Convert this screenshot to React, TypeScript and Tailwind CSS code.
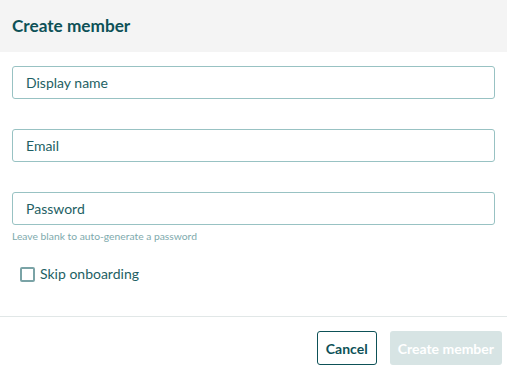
import React from "react";

function Field({ label }: { label: string }) {
  return (
    <div className="h-[33px] w-full rounded-[3px] border border-[#98c2c3] flex items-center pl-[13px] text-[14px] text-[#1e5f64]">
      {label}
    </div>
  );
}

export default function App() {
  return (
    <div className="w-[507px] h-[376px] bg-white" style={{ fontFamily: "Lato, 'Noto Sans', sans-serif" }}>
      <div className="h-[52px] bg-[#f4f4f4] flex items-center px-[12px]">
        <h1 className="text-[17.2px] font-bold text-[#0d5157] leading-none">Create member</h1>
      </div>
      <div className="px-[12px] pt-[14px]">
        <Field label="Display name" />
        <div className="h-[30px]" />
        <Field label="Email" />
        <div className="h-[30px]" />
        <Field label="Password" />
        <div className="mt-[5px] text-[10.3px] text-[#7eaaad] leading-[12px]">Leave blank to auto-generate a password</div>
        <label className="mt-[23px] ml-[8px] flex items-center gap-[5px] text-[14px] leading-[18px] text-[#1e5f64]">
          <span className="w-[15px] h-[15px] rounded-[2px] border-2 border-[#7aa3a6] bg-white" />
          Skip onboarding
        </label>
      </div>
      <div className="mt-[33px] border-t border-[#e1e7e7] flex justify-end gap-[13px] pr-[5px] pt-[14px]">
        <button className="h-[34px] px-[8px] rounded-[3px] border border-[#0d5157] text-[14px] font-bold text-[#0d5157] bg-white">
          Cancel
        </button>
        <button className="h-[34px] px-[8px] rounded-[3px] bg-[#d7e4e4] text-[14px] font-bold text-white">
          Create member
        </button>
      </div>
    </div>
  );
}
